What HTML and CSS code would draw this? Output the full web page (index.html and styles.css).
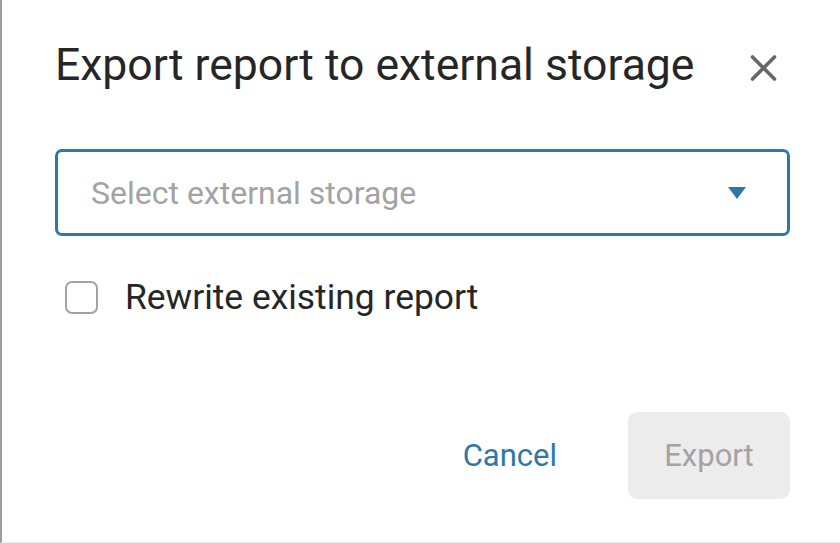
FILE: index.html
```html
<!DOCTYPE html>
<html lang="en">
<head>
  <meta charset="UTF-8">
  <title>Export report</title>
  <link rel="stylesheet" href="styles.css">
</head>
<body>

<div class="dialog">
  <div class="dialog-header">
    <h2 class="dialog-title">Export report to external storage</h2>
    <button class="close-btn" aria-label="Close">
      <svg viewBox="0 0 27 26" class="close-icon">
        <path d="M2.5 2L24.5 24M24.5 2L2.5 24"/>
      </svg>
    </button>
  </div>

  <div class="select-box">
    <span class="placeholder">Select external storage</span>
    <svg class="caret" viewBox="0 0 18 12">
      <path d="M0 0H18L9 12Z"/>
    </svg>
  </div>

  <label class="check-row">
    <span class="checkbox"></span>
    <span class="check-label">Rewrite existing report</span>
  </label>

  <div class="actions">
    <button class="cancel-btn">Cancel</button>
    <button class="export-btn" disabled>Export</button>
  </div>
</div>

</body>
</html>
```

FILE: styles.css
```css
:root {
  --primary: #2e78a5;
  --text: #262626;
  --muted: #a3a3a3;
}
html, body {
  height: 100%;
}
body {
  margin: 0;
  font-family: Roboto, 'Liberation Sans', sans-serif;
  background: #fff;
  border-left: 2px solid #9c9c9c;
  border-bottom: 1px solid #ebebeb;
  box-sizing: border-box;
}
.dialog {
  padding: 40px 50px 0 53px;
}
.dialog-header {
  display: flex;
  align-items: flex-start;
  justify-content: space-between;
  height: 52px;
}
.dialog-title {
  margin: -1px 0 0;
  font-size: 44.5px;
  font-weight: 400;
  line-height: 52px;
  color: var(--text);
}
.close-btn {
  background: none;
  border: none;
  padding: 0;
  margin: 15px 13px 0 0;
  width: 27px;
  height: 26px;
  cursor: pointer;
}
.close-icon {
  display: block;
  width: 27px;
  height: 26px;
  stroke: #676767;
  stroke-width: 3.6;
  stroke-linecap: round;
  fill: none;
}
.select-box {
  margin-top: 57px;
  height: 87px;
  box-sizing: border-box;
  border: 3px solid var(--primary);
  border-radius: 7px;
  display: flex;
  align-items: center;
  justify-content: space-between;
  padding: 0 41px 0 33px;
}
.placeholder {
  font-size: 32px;
  color: var(--muted);
}
.caret {
  width: 18px;
  height: 12px;
  fill: var(--primary);
}
.check-row {
  margin-top: 45px;
  display: flex;
  align-items: center;
  gap: 27px;
  padding-left: 10px;
  height: 33px;
}
.checkbox {
  width: 33px;
  height: 33px;
  box-sizing: border-box;
  border: 2px solid #a2a2a2;
  border-radius: 7px;
}
.check-label {
  font-size: 35.4px;
  line-height: 33px;
  color: var(--text);
}
.actions {
  margin-top: 98px;
  display: flex;
  justify-content: flex-end;
  align-items: center;
  gap: 71px;
}
.cancel-btn {
  background: none;
  border: none;
  padding: 0;
  font-family: inherit;
  font-size: 31px;
  color: var(--primary);
  cursor: pointer;
}
.export-btn {
  width: 162px;
  height: 87px;
  border: none;
  border-radius: 9px;
  background: #ececec;
  color: var(--muted);
  font-family: inherit;
  font-size: 31px;
}
```
